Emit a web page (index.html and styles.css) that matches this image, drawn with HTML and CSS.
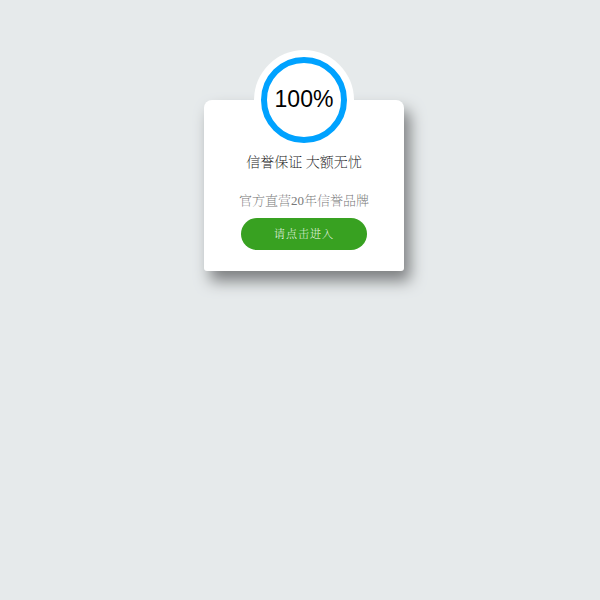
FILE: index.html
```html
<!DOCTYPE html>
<html lang="zh-CN">
<head>
<meta charset="utf-8">
<title>信誉保证</title>
<link rel="stylesheet" href="styles.css">
</head>
<body>
<main class="card">
  <div class="badge">
    <svg class="ring" viewBox="0 0 100 100" role="img" aria-label="100%">
      <circle cx="50" cy="50" r="40" fill="none" stroke="#00a2ff" stroke-width="6"/>
      <text class="percent" x="50" y="57" text-anchor="middle">100%</text>
    </svg>
  </div>
  <h1 class="title">信誉保证 大额无忧</h1>
  <p class="note">官方直营20年信誉品牌</p>
  <a class="enter" href="#">请点击进入</a>
</main>
</body>
</html>
```

FILE: styles.css
```css
body {
  box-sizing: border-box;
  min-height: 100vh;
  margin: 0;
  padding: 100px 0 0 8px;
  background: #e6eaeb;
  font-family: "Liberation Serif", "Noto Serif CJK SC", serif;
  font-weight: 200;
}

.card {
  display: flex;
  flex-direction: column;
  align-items: center;
  box-sizing: border-box;
  width: 200px;
  margin: 0 auto;
  padding-bottom: 21px;
  border-radius: 8px 8px 3px 3px;
  background: #fff;
  box-shadow: 6px 10px 15px #7d7f81;
}

.badge {
  width: 100px;
  height: 100px;
  margin-top: -50px;
  border-radius: 50%;
  background: #fff;
}

.ring {
  display: block;
  width: 100%;
}

.percent {
  font: 23px "Liberation Sans", sans-serif;
}

.title {
  margin: 0;
  font-size: 14px;
  line-height: 26px;
  font-weight: 200;
  color: #222;
}

.note {
  margin: 14px 0 6px;
  font-size: 13px;
  line-height: 22px;
  color: #777;
}

.enter {
  padding: 0 33px;
  border-radius: 16px;
  background: #38a121;
  color: #fff;
  font-size: 11px;
  line-height: 32px;
  letter-spacing: 1px;
  text-decoration: none;
}
```
